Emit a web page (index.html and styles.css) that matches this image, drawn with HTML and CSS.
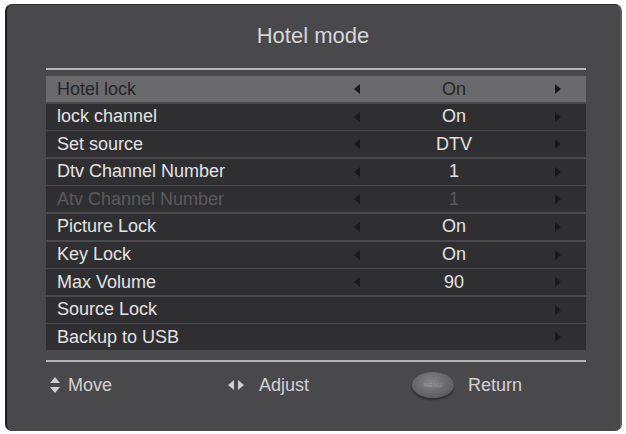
FILE: index.html
```html
<!DOCTYPE html>
<html>
<head>
<meta charset="utf-8">
<link rel="stylesheet" href="styles.css">
</head>
<body>
<div class="panel">
  <div class="title">Hotel mode</div>
  <div class="rule"></div>
  <div class="list">
    <div class="row sel"><span class="label">Hotel lock</span><span class="tri l"></span><span class="val">On</span><span class="tri r"></span></div>
    <div class="row"><span class="label">lock channel</span><span class="tri l"></span><span class="val">On</span><span class="tri r"></span></div>
    <div class="row"><span class="label">Set source</span><span class="tri l"></span><span class="val">DTV</span><span class="tri r"></span></div>
    <div class="row"><span class="label">Dtv Channel Number</span><span class="tri l"></span><span class="val">1</span><span class="tri r"></span></div>
    <div class="row dis"><span class="label">Atv Channel Number</span><span class="tri l"></span><span class="val">1</span><span class="tri r"></span></div>
    <div class="row"><span class="label">Picture Lock</span><span class="tri l"></span><span class="val">On</span><span class="tri r"></span></div>
    <div class="row"><span class="label">Key Lock</span><span class="tri l"></span><span class="val">On</span><span class="tri r"></span></div>
    <div class="row"><span class="label">Max Volume</span><span class="tri l"></span><span class="val">90</span><span class="tri r"></span></div>
    <div class="row"><span class="label">Source Lock</span><span class="empty"></span><span class="val"></span><span class="tri r"></span></div>
    <div class="row"><span class="label">Backup to USB</span><span class="empty"></span><span class="val"></span><span class="tri r"></span></div>
  </div>
  <div class="rule bottom"></div>
  <div class="footer">
    <div class="fitem move"><span class="updown"><span class="up"></span><span class="down"></span></span><span>Move</span></div>
    <div class="fitem adjust"><span class="lr"><span class="tri sl"></span><span class="tri sr"></span></span><span>Adjust</span></div>
    <div class="fitem ret"><span class="menubtn">MENU</span><span>Return</span></div>
  </div>
</div>
</body>
</html>
```
FILE: styles.css
```css
html, body {
  margin: 0;
  padding: 0;
  background: #ffffff;
}
body {
  font-family: "Liberation Sans", Arial, sans-serif;
  width: 626px;
  height: 434px;
  overflow: hidden;
}
.panel {
  box-sizing: border-box;
  margin: 4px 0 0 5px;
  width: 617px;
  height: 427px;
  background: #49494b;
  border-left: 2px solid #1f1f21;
  border-top: 1px solid #2c2c2e;
  border-right: 2px solid #5c5c5e;
  border-radius: 7px;
  padding: 0 34px 0 39px;
}
.title {
  padding-top: 19px;
  height: 24px;
  line-height: 24px;
  text-align: center;
  font-size: 22px;
  color: #d6d6d8;
  padding-right: 6px;
}
.rule {
  margin-top: 20px;
  height: 2px;
  background: #b4b4b6;
}
.list {
  margin-top: 6px;
  display: flex;
  flex-direction: column;
  gap: 1.6px;
}
.row {
  height: 26px;
  display: grid;
  grid-template-columns: 308px 6px 195px 6px 1fr;
  align-items: center;
  background: #2f2f31;
  color: #e2e2e2;
  font-size: 18px;
}
.row.sel {
  background: #6a6a6c;
  color: #262628;
}
.row.dis {
  color: #5a5a5c;
}
.label {
  padding-left: 11px;
  white-space: nowrap;
}
.val {
  text-align: center;
  padding-right: 7px;
}
.tri {
  width: 0;
  height: 0;
  border-top: 5px solid transparent;
  border-bottom: 5px solid transparent;
}
.tri.l {
  border-right: 6px solid #1a1a1c;
}
.tri.r {
  border-left: 6px solid #1a1a1c;
}
.rule.bottom {
  margin-top: 10px;
}
.footer {
  margin-top: 10px;
  height: 26px;
  display: flex;
  align-items: center;
  font-size: 18px;
  color: #d2d2d4;
}
.fitem {
  display: flex;
  align-items: center;
}
.move {
  width: 182px;
  padding-left: 4px;
  box-sizing: border-box;
  gap: 8px;
}
.updown {
  display: flex;
  flex-direction: column;
  gap: 4px;
}
.up {
  width: 0; height: 0;
  border-left: 5px solid transparent;
  border-right: 5px solid transparent;
  border-bottom: 6px solid #cfcfd1;
}
.down {
  width: 0; height: 0;
  border-left: 5px solid transparent;
  border-right: 5px solid transparent;
  border-top: 6px solid #cfcfd1;
}
.adjust {
  width: 184px;
  gap: 15px;
}
.lr {
  display: flex;
  gap: 4px;
}
.tri.sl {
  border-right: 6px solid #cfcfd1;
}
.tri.sr {
  border-left: 6px solid #cfcfd1;
}
.ret {
  gap: 14px;
}
.menubtn {
  width: 42px;
  height: 26px;
  border-radius: 50%;
  background: radial-gradient(ellipse at 45% 38%, #858587 0%, #6c6c6e 45%, #505052 100%);
  box-shadow: 0 2px 2px rgba(20, 20, 22, 0.5);
  font-size: 6px;
  color: #9a9a9c;
  display: flex;
  align-items: center;
  justify-content: center;
  letter-spacing: 0.3px;
}
```
